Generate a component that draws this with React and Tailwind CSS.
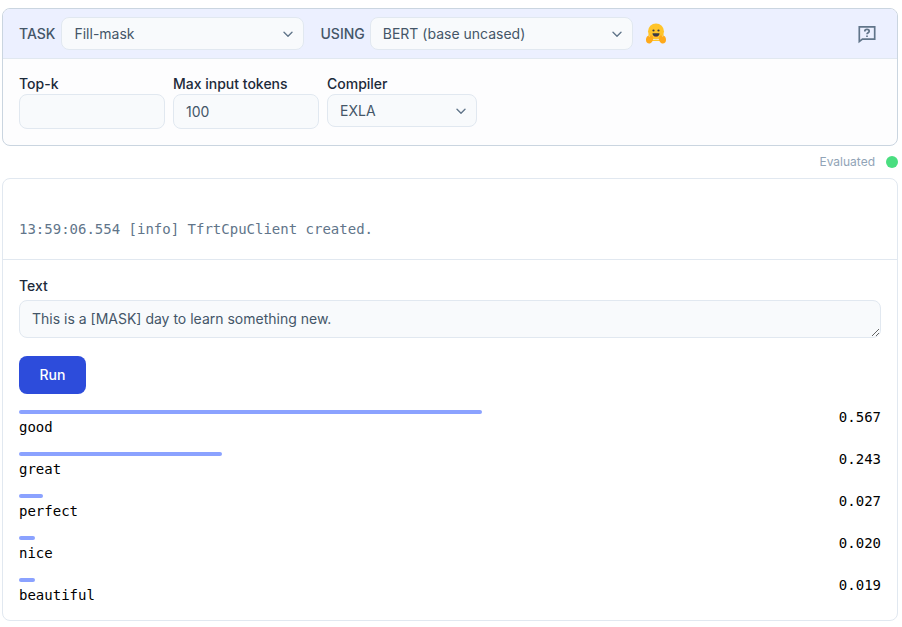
const results = [
  { label: 'good', score: '0.567', width: 'w-[463px]' },
  { label: 'great', score: '0.243', width: 'w-[203px]' },
  { label: 'perfect', score: '0.027', width: 'w-[24px]' },
  { label: 'nice', score: '0.020', width: 'w-[16px]' },
  { label: 'beautiful', score: '0.019', width: 'w-[16px]' },
];

function Select({ value, className }) {
  return (
    <div className={`flex items-center justify-between h-[33px] pl-3 pr-[5px] rounded-lg border border-[#e1e8f0] bg-[#f8fafc] text-sm text-[#445668] ${className}`}>
      <span>{value}</span>
      <svg width="20" height="20" viewBox="0 0 20 20" fill="none" stroke="#61758a" strokeWidth="1.400" strokeLinecap="round" strokeLinejoin="round">
        <path d="M6 8.200l4 4 4-4" />
      </svg>
    </div>
  );
}

function Hugging() {
  return (
    <svg width="24" height="24" viewBox="0 0 24 24" className="shrink-0">
      <circle cx="12" cy="9.500" r="8" fill="#ffc42a" />
      <path d="M4.500 12c1 4 4 6 7.500 6s6.500-2 7.500-6l1 7H3.500z" fill="#ffc42a" />
      <circle cx="9.500" cy="8.500" r="1.100" fill="#3a3b45" />
      <circle cx="14.500" cy="8.500" r="1.100" fill="#3a3b45" />
      <path d="M8.500 11.300h7c0 2.200-1.500 3.400-3.500 3.400s-3.500-1.200-3.500-3.400z" fill="#3a3b45" />
      <path d="M10.200 13.900c1.100.5 2.500.5 3.600 0-.4.500-1 .8-1.800.8s-1.400-.3-1.800-.8z" fill="#ef4e4e" />
      <path d="M2 18c0-2 .7-3.600 1.700-4 .8-.2 1.100.4 1.400 1l1.500-1.600c.7-.4 1.300.1 1.400.7.800 0 1.300.8 1.100 1.600.2 3-1.600 5.800-3.900 5.800-2 0-3.200-1.300-3.200-3.500z" fill="#ffa91a" />
      <path d="M22 18c0-2-.7-3.600-1.700-4-.8-.2-1.100.4-1.400 1l-1.500-1.600c-.7-.4-1.300.1-1.400.7-.8 0-1.300.8-1.100 1.600-.2 3 1.600 5.800 3.900 5.800 2 0 3.200-1.300 3.200-3.500z" fill="#ffa91a" />
    </svg>
  );
}

export default function App() {
  return (
    <div className="pt-2 pl-[2px] pr-[4px] bg-white font-['Inter',sans-serif] text-[#1c2a3a]">
      {/* settings card */}
      <div className="rounded-lg border border-[#cad5e0] bg-[#fdfdfe] overflow-hidden">
        <div className="flex items-center h-[50px] px-4 bg-[#ecf0ff] border-b border-[#e1e8f0]">
          <span className="text-sm font-medium text-[#445668] mr-[6px]">TASK</span>
          <Select value="Fill-mask" className="w-[243px] mr-4" />
          <span className="text-sm font-medium text-[#445668] mr-[5px]">USING</span>
          <Select value="BERT (base uncased)" className="w-[263px] mr-[11px]" />
          <Hugging />
          <button className="ml-auto mr-[4px] text-[#61758a]">
            <svg width="20" height="20" viewBox="0 0 20 20" fill="none" stroke="currentColor" strokeWidth="1.700" className="block">
              <path d="M2.300 2.800h15.400v12.400H5.400l-3.100 2.400z" />
              <path d="M7.800 7.400c0-1.300 1-2 2.200-2s2.200.8 2.200 1.900c0 1.500-2.200 1.500-2.200 3" strokeWidth="1.700" />
              <path d="M10 11.600v1.500" strokeWidth="1.700" />
            </svg>
          </button>
        </div>
        <div className="flex gap-2 px-4 pt-[15px] h-[86px]">
          <div className="flex flex-col w-[146px]">
            <label className="text-sm font-medium leading-5">Top-k</label>
            <input className="h-[35px] w-full px-3 rounded-lg border border-[#e1e8f0] bg-[#f8fafc] text-sm text-[#445668]" />
          </div>
          <div className="flex flex-col w-[146px]">
            <label className="text-sm font-medium leading-5">Max input tokens</label>
            <input defaultValue="100" className="h-[35px] w-full px-3 rounded-lg border border-[#e1e8f0] bg-[#f8fafc] text-sm text-[#445668]" />
          </div>
          <div className="flex flex-col w-[150px]">
            <label className="text-sm font-medium leading-5">Compiler</label>
            <Select value="EXLA" className="w-full" />
          </div>
        </div>
      </div>

      {/* status */}
      <div className="flex items-center justify-end h-8 gap-[11px]">
        <span className="text-xs text-[#91a4b7]">Evaluated</span>
        <span className="w-3 h-3 rounded-full bg-[#4ade80]" />
      </div>

      {/* output card */}
      <div className="rounded-lg border border-[#e1e8f0] bg-white">
        <div className="h-[81px] px-4 pt-[40px] border-b border-[#e1e8f0] font-['DejaVu_Sans_Mono',monospace] text-sm leading-5 text-[#61758a]">
          13:59:06.554 [info] TfrtCpuClient created.
        </div>
        <div className="px-4 pt-4 pb-[15px]">
          <label className="block text-sm font-medium leading-5 mb-[4px]">Text</label>
          <textarea
            defaultValue="This is a [MASK] day to learn something new."
            rows={1}
            className="block w-full h-[38px] px-3 py-2 rounded-lg border border-[#e1e8f0] bg-[#f8fafc] text-sm leading-5 text-[#445668]"
          />
          <button className="block mt-[18px] h-[38px] w-[67px] rounded-lg bg-[#2d4cdb] text-sm font-medium text-white">Run</button>
          <div className="mt-4 flex flex-col gap-[15px]">
            {results.map((r) => (
              <div key={r.label} className="flex items-start justify-between font-['DejaVu_Sans_Mono',monospace] text-sm text-black">
                <div className="flex flex-col">
                  <div className={`h-1 rounded-full bg-[#8ba2ff] ${r.width}`} />
                  <span className="mt-[3px] leading-5">{r.label}</span>
                </div>
                <span className="leading-[14px]">{r.score}</span>
              </div>
            ))}
          </div>
        </div>
      </div>
    </div>
  );
}
